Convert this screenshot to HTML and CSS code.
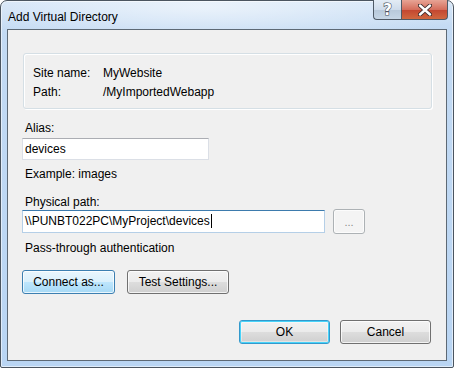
FILE: index.html
```html
<!DOCTYPE html>
<html lang="en">
<head>
  <meta charset="UTF-8" />
  <title>Add Virtual Directory</title>
  <link rel="stylesheet" href="styles.css">
</head>
<body>
  <!-- Dialog window -->
  <div class="window">
    <div class="titlebar">
      <span class="title">Add Virtual Directory</span>
      <div class="caption-buttons">
        <div class="cap help">?</div>
        <div class="cap close">
          <svg width="14" height="12" viewBox="0 0 14 12">
            <path d="M2 1.5 L12 10.5 M12 1.5 L2 10.5" stroke="#3a2a2a" stroke-width="4.2" stroke-linecap="round" fill="none"/>
            <path d="M2 1.5 L12 10.5 M12 1.5 L2 10.5" stroke="#fff" stroke-width="2.4" stroke-linecap="round" fill="none"/>
          </svg>
        </div>
      </div>
    </div>

    <div class="client">
      <!-- Site info -->
      <div class="info-box">
        <div class="info-row"><span class="info-label">Site name:</span><span>MyWebsite</span></div>
        <div class="info-row"><span class="info-label">Path:</span><span>/MyImportedWebapp</span></div>
      </div>

      <div class="field-label first">Alias:</div>
      <div class="textbox alias">devices</div>
      <div class="hint">Example: images</div>

      <div class="field-label">Physical path:</div>
      <div class="path-row">
        <div class="textbox path focused">\\PUNBT022PC\MyProject\devices<span class="caret"></span></div>
        <div class="btn browse">...</div>
      </div>
      <div class="hint auth">Pass-through authentication</div>

      <div class="btn-row">
        <div class="btn hot connect">Connect as...</div>
        <div class="btn test">Test Settings...</div>
      </div>

      <div class="dialog-buttons">
        <div class="btn default">OK</div>
        <div class="btn">Cancel</div>
      </div>
    </div>
  </div>
</body>
</html>
```

FILE: styles.css
```css
/* =============== BASE =============== */
html,
body {
  margin: 0;
  padding: 0;
  background: #ffffff;
  font-family: "Segoe UI", "Liberation Sans", Arial, sans-serif;
  font-size: 12px;
  color: #000;
}

/* =============== WINDOW FRAME =============== */
.window {
  box-sizing: border-box;
  width: 454px;
  height: 368px;
  display: flex;
  flex-direction: column;
  border: 1px solid #4b5560;
  border-radius: 7px 7px 2px 2px;
  background:
    radial-gradient(ellipse 60% 40px at 45% 6px, rgba(255, 255, 255, 0.55), rgba(255, 255, 255, 0)),
    linear-gradient(to bottom, #d4e5f7 0, #c3daf3 28px, #b9d5f3 100%);
  box-shadow: inset 0 0 0 1px rgba(255, 255, 255, 0.55);
}

.titlebar {
  height: 28px;
  display: flex;
  justify-content: space-between;
  flex-shrink: 0;
}
.title {
  padding: 8px 0 0 7px;
  line-height: 16px;
}

/* caption buttons */
.caption-buttons {
  display: flex;
  margin: -1px 5px 0 0;
  align-self: flex-start;
}
.cap {
  box-sizing: border-box;
  height: 20px;
  display: flex;
  align-items: center;
  justify-content: center;
  border: 1px solid #4f5a66;
  border-top: none;
}
.help {
  width: 28px;
  border-right: none;
  border-radius: 0 0 0 4px;
  background: linear-gradient(to bottom, #e3ecf5 0, #cfdceb 50%, #b7c8da 51%, #c6d6e6 100%);
  color: #fff;
  font-family: "DejaVu Sans", sans-serif;
  font-weight: bold;
  font-size: 15px;
  -webkit-text-stroke: 1.2px #4a5260;
  paint-order: stroke fill;
}
.close {
  width: 47px;
  border-radius: 0 0 4px 0;
  background: linear-gradient(to bottom, #e7a495 0, #d56e5c 50%, #c24530 51%, #d0683f 100%);
}

/* =============== CLIENT AREA =============== */
.client {
  flex: 1;
  margin: 0 6px 6px 6px;
  border: 1px solid #5d6975;
  background: #f0f0f0;
  display: flex;
  flex-direction: column;
  align-items: flex-start;
}

.info-box {
  box-sizing: border-box;
  width: 409px;
  margin: 23px 0 0 15px;
  padding: 10px 0 6px 9px;
  border: 1px solid #d5dfe5;
  border-radius: 3px;
  box-shadow: 1px 1px 0 #fff, inset 1px 1px 0 #fff;
  line-height: 19px;
}
.info-row {
  display: flex;
}
.info-label {
  width: 70px;
}

.field-label,
.hint {
  margin-left: 17px;
  line-height: 15px;
}
.field-label {
  margin-top: 13px;
}
.field-label.first {
  margin-top: 12px;
}
.hint {
  margin-top: 7px;
}

/* =============== TEXT BOXES =============== */
.textbox {
  box-sizing: border-box;
  height: 22px;
  margin-left: 14px;
  padding-left: 2px;
  line-height: 21px;
  background: #fff;
  border: 1px solid #dbdfe6;
  border-top-color: #abadb3;
  white-space: nowrap;
}
.alias {
  width: 187px;
  margin-top: 2px;
}
.path-row {
  display: flex;
  align-items: flex-start;
  margin: -1px 0 0 14px;
  gap: 8px;
}
.path {
  width: 303px;
  height: 23px;
  margin: 1px 0 0 0;
}
.focused {
  border-color: #b5cfe7;
  border-top-color: #3d7bad;
}
.caret {
  display: inline-block;
  width: 1px;
  height: 14px;
  margin-left: 1px;
  background: #000;
  vertical-align: -3px;
}

/* =============== BUTTONS =============== */
.btn {
  box-sizing: border-box;
  height: 24px;
  display: flex;
  align-items: center;
  justify-content: center;
  border: 1px solid #707070;
  border-radius: 3px;
  background: linear-gradient(to bottom, #f2f2f2 0, #ebebeb 50%, #dddddd 51%, #cfcfcf 100%);
  box-shadow: inset 0 0 0 1px rgba(255, 255, 255, 0.75);
}
.browse {
  width: 32px;
  height: 25px;
  border-color: #adb2b5;
  background: #f4f4f4;
  color: #8a8a8a;
  font-size: 11px;
}
.btn-row {
  display: flex;
  gap: 12px;
  margin: 14px 0 0 14px;
}
.connect {
  width: 93px;
}
.test {
  width: 102px;
}
.hot {
  border-color: #3c7fb1;
  background: linear-gradient(to bottom, #eaf6fd 0, #d9f0fc 50%, #bee6fd 51%, #a7d9f5 100%);
}

.dialog-buttons {
  display: flex;
  gap: 10px;
  align-self: flex-end;
  margin: 26px 15px 0 0;
}
.dialog-buttons .btn {
  width: 91px;
}
.default {
  border-color: #3399cc;
  box-shadow: inset 0 0 0 1px #48d3f9, inset 0 0 0 2px rgba(255, 255, 255, 0.4);
}
```
